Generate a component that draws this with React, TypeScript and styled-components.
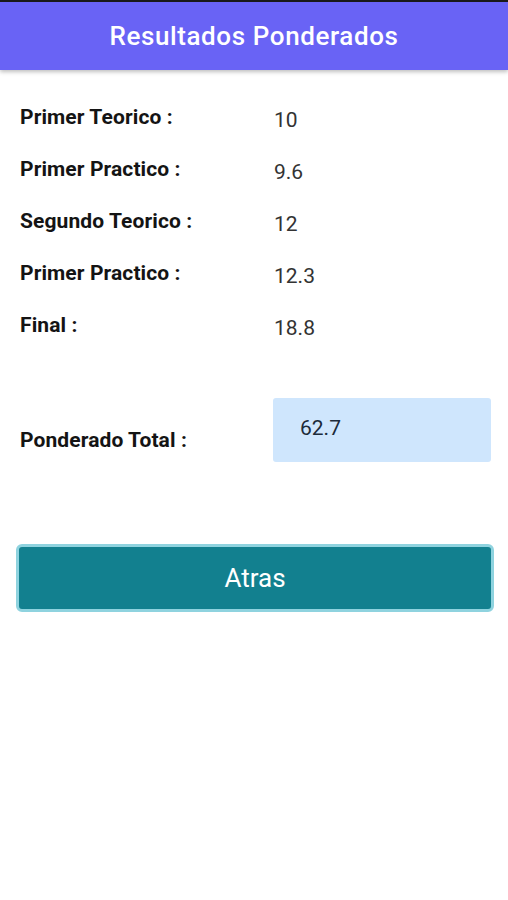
import styled, { createGlobalStyle } from "styled-components";

const GlobalStyle = createGlobalStyle`
  html, body {
    margin: 0;
    padding: 0;
    background: #ffffff;
    font-family: Roboto, "Liberation Sans", sans-serif;
  }
`;

const Screen = styled.div`
  width: 508px;
  min-height: 900px;
  background: #ffffff;
  border-top: 2px solid #1a1a1a;
  box-sizing: border-box;
`;

const Header = styled.header`
  height: 68px;
  background: #6963f5;
  display: flex;
  align-items: center;
  justify-content: center;
  box-shadow: 0 2px 4px rgba(0, 0, 0, 0.25);
`;

const Title = styled.h1`
  margin: 0;
  color: #ffffff;
  font-size: 26px;
  font-weight: 500;
  letter-spacing: 0.6px;
`;

const Body = styled.main`
  padding: 21px 15px 0 20px;
`;

const Row = styled.div`
  display: grid;
  grid-template-columns: 254px 1fr;
  align-items: center;
  height: 52px;
`;

const Label = styled.div`
  font-size: 21px;
  font-weight: 700;
  color: #141414;
  letter-spacing: 0.1px;
`;

const Value = styled.div`
  font-size: 21px;
  color: #333333;
  padding-top: 6px;
`;

const TotalRow = styled.div`
  display: grid;
  grid-template-columns: 253px 218px;
  margin-top: 47px;
`;

const TotalLabel = styled(Label)`
  padding-top: 30px;
`;

const TotalBox = styled.div`
  height: 64px;
  background: #cfe6fd;
  border-radius: 3px;
  box-sizing: border-box;
  padding: 18px 0 0 27px;
  font-size: 21px;
  color: #1c2b3a;
`;

const BackButton = styled.button`
  display: block;
  width: 478px;
  height: 68px;
  margin: 82px 0 0 -4px;
  background: #12808f;
  border: 3px solid #8fd3df;
  border-radius: 6px;
  color: #ffffff;
  font-family: Roboto, "Liberation Sans", sans-serif;
  font-size: 26px;
  cursor: pointer;
`;

const results = [
  { label: "Primer Teorico :", value: "10" },
  { label: "Primer Practico :", value: "9.6" },
  { label: "Segundo Teorico :", value: "12" },
  { label: "Primer Practico :", value: "12.3" },
  { label: "Final :", value: "18.8" },
];

export default function App() {
  return (
    <>
      <GlobalStyle />
      <Screen>
        <Header>
          <Title>Resultados Ponderados</Title>
        </Header>
        <Body>
          {results.map((r, i) => (
            <Row key={i}>
              <Label>{r.label}</Label>
              <Value>{r.value}</Value>
            </Row>
          ))}
          <TotalRow>
            <TotalLabel>Ponderado Total :</TotalLabel>
            <TotalBox>62.7</TotalBox>
          </TotalRow>
          <BackButton>Atras</BackButton>
        </Body>
      </Screen>
    </>
  );
}
